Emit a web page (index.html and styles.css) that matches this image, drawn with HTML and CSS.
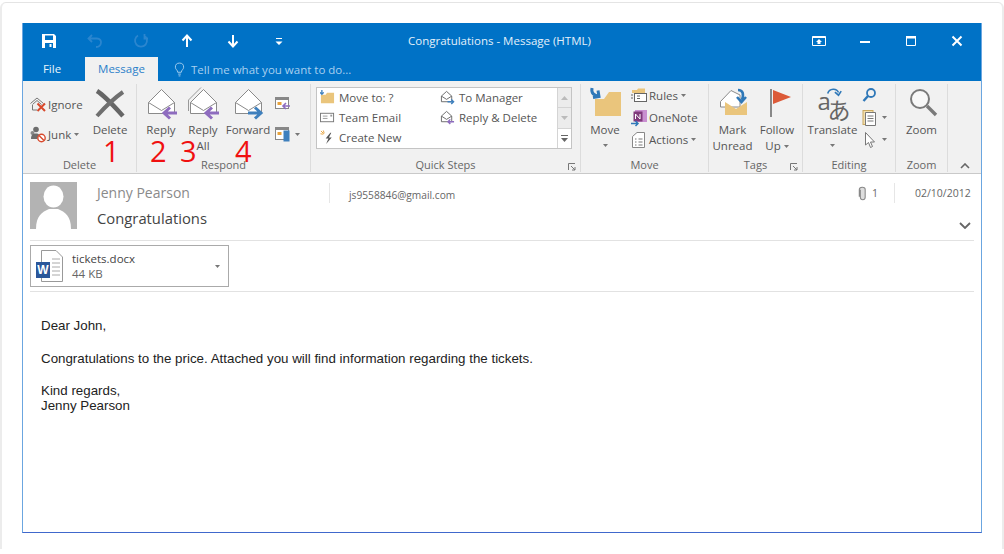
FILE: index.html
```html
<!DOCTYPE html>
<html lang="en">
<head>
  <meta charset="UTF-8">
  <meta name="viewport" content="width=device-width, initial-scale=1.0">
  <link rel="stylesheet" href="styles.css">
  <title>Congratulations - Message (HTML)</title>
</head>
<body>

  <!-- shared icons -->
  <svg class="defs" width="0" height="0">
    <symbol id="open-mail" viewBox="0 0 34 34">
      <path d="M4.500 15.500 17.500 2.500 30.500 15.500V26.500H4.500Z" fill="#fff" stroke="#8a8a8a"/>
      <path d="M4.500 15.500 17.500 23.500 30.500 15.500" fill="none" stroke="#8a8a8a"/>
    </symbol>
    <symbol id="mini-mail" viewBox="0 0 16 16">
      <path d="M1.500 6.500 7 1.500 12.500 6.500V12.500H1.500Z" fill="#fff" stroke="#666"/>
      <path d="M1.500 6.500 7 10 12.500 6.500" fill="none" stroke="#666"/>
    </symbol>
    <symbol id="caret" viewBox="0 0 7 4">
      <path d="M0 0H7L3.500 4Z" fill="#777"/>
    </symbol>
  </svg>

  <div class="page">
    <div class="window">

      <!-- title bar -->
      <header class="titlebar">
        <div class="qat">
          <svg class="qat-icon" viewBox="0 0 16 16"><path d="M1 1H13L15 3V15H1Z" fill="#fff"/><rect x="4" y="2.500" width="8" height="4.500" fill="#0072c6"/><rect x="4" y="10" width="8" height="5" fill="#0072c6"/><rect x="8.500" y="11" width="2" height="3" fill="#fff"/></svg>
          <svg class="qat-icon" viewBox="0 0 16 16"><path d="M5 2 1.500 5.500 5 9M2 5.500H10C16 5.500 15 14 9 14" fill="none" stroke="#2b86cf" stroke-width="1.800"/></svg>
          <svg class="qat-icon" viewBox="0 0 16 16"><path d="M5 2.500A6 6 0 1 0 11 2.500M11.500 1V5.500H15" fill="none" stroke="#2b86cf" stroke-width="1.800"/></svg>
          <svg class="qat-icon" viewBox="0 0 16 16"><path d="M8 14V3M3.500 7.500 8 2.500 12.500 7.500" fill="none" stroke="#fff" stroke-width="2"/></svg>
          <svg class="qat-icon" viewBox="0 0 16 16"><path d="M8 2V13M3.500 8.500 8 13.500 12.500 8.500" fill="none" stroke="#fff" stroke-width="2"/></svg>
          <svg class="qat-icon" viewBox="0 0 16 16"><path d="M5 5H11V6H5ZM4.500 8.500H11.500L8 12Z" fill="#fff"/></svg>
        </div>
        <div class="title">Congratulations - Message (HTML)</div>
        <div class="controls">
          <svg class="control" viewBox="0 0 16 16"><path d="M1.500 3.500H14.500V12.500H1.500Z" fill="none" stroke="#fff"/><path d="M1.500 3.500H14.500V5H1.500ZM8 6 11 9H9.500V11H6.500V9H5Z" fill="#fff"/></svg>
          <svg class="control" viewBox="0 0 16 16"><rect x="3" y="8" width="10" height="2" fill="#fff"/></svg>
          <svg class="control" viewBox="0 0 16 16"><path d="M3.500 3.500H12.500V12.500H3.500Z" fill="none" stroke="#fff"/><rect x="3" y="3" width="10" height="2.500" fill="#fff"/></svg>
          <svg class="control" viewBox="0 0 16 16"><path d="M3.500 3.500 12.500 12.500M12.500 3.500 3.500 12.500" stroke="#fff" stroke-width="2"/></svg>
        </div>
      </header>

      <nav class="tabs">
        <span class="tab">File</span>
        <span class="tab tab-active">Message</span>
        <span class="tell-me">
          <svg class="bulb" viewBox="0 0 12 16"><path d="M4 11C4 8.500 1.500 8 1.500 5.500A4.500 4.500 0 0 1 10.500 5.500C10.500 8 8 8.500 8 11ZM4.500 13H7.500M5 15H7" fill="none" stroke="#a9d0f0"/></svg>
          Tell me what you want to do...
        </span>
      </nav>

      <!-- ribbon -->
      <section class="ribbon">

        <div class="group group-delete">
          <div class="group-body">
            <div class="small-col small-col-two">
              <div class="small-btn">
                <svg class="small-icon" viewBox="0 0 18 18"><path d="M1.500 8.500 8 3 14.500 8.500M3.500 9.500 8 5.500 12.500 9.500M3.500 10V15H8" fill="none" stroke="#777"/><path d="M8.500 8.500 16 16M16 8.500 8.500 16" stroke="#d8492c" stroke-width="2"/></svg>
                Ignore
              </div>
              <div class="small-btn">
                <svg class="small-icon" viewBox="0 0 18 18"><circle cx="7" cy="4.500" r="2.800" fill="#6d6d6d"/><circle cx="3.500" cy="8" r="2" fill="#8a8a8a"/><path d="M2 14C2 9.500 4 8.500 7 8.500C9 8.500 10 9 10.500 10.500L8 14Z" fill="#6d6d6d"/><circle cx="12.500" cy="13" r="3.700" fill="#fff" stroke="#d8492c" stroke-width="1.400"/><path d="M10 10.500 15 15.500" stroke="#d8492c" stroke-width="1.400"/></svg>
                Junk <svg class="caret"><use href="#caret"/></svg>
              </div>
            </div>
            <div class="big-btn btn-delete">
              <svg class="big-icon" viewBox="0 0 34 35"><path d="M4 4C12 9 20 18 30 29" fill="none" stroke="#666" stroke-width="4.500"/><path d="M30 5C20 12 12 20 4 29" fill="none" stroke="#6f6f6f" stroke-width="4"/></svg>
              <span>Delete</span>
            </div>
          </div>
          <div class="group-label">Delete</div>
        </div>

        <div class="group group-respond">
          <div class="group-body">
            <div class="big-btn btn-reply">
              <svg class="big-icon" viewBox="0 0 34 35"><use href="#open-mail" width="34" height="34"/><path d="M33 26H21M26 20.500 20 26 26 31.500" fill="none" stroke="#8e6cbf" stroke-width="3"/></svg>
              <span>Reply</span>
            </div>
            <div class="big-btn btn-reply">
              <svg class="big-icon" viewBox="0 0 34 35"><path d="M2.500 24V13L15 .500" fill="none" stroke="#999"/><use href="#open-mail" width="34" height="34"/><path d="M33 26H21M26 20.500 20 26 26 31.500" fill="none" stroke="#8e6cbf" stroke-width="3"/></svg>
              <span>Reply</span>
              <span>All</span>
            </div>
            <div class="big-btn btn-forward">
              <svg class="big-icon" viewBox="0 0 34 35"><use href="#open-mail" width="34" height="34"/><path d="M17 26H29M24 20.500 30 26 24 31.500" fill="none" stroke="#3f80bd" stroke-width="3"/></svg>
              <span>Forward</span>
            </div>
            <div class="small-col small-col-two icon-col">
              <div class="small-btn">
                <svg class="small-icon" viewBox="0 0 18 18"><rect x="1.500" y="2.500" width="13" height="11" fill="#fff" stroke="#888"/><rect x="1.500" y="2.500" width="13" height="2.500" fill="#888"/><rect x="3.500" y="7" width="4" height="3" fill="#e8a33d"/><path d="M16 11H9M12 8 9 11 12 14" fill="none" stroke="#8e6cbf" stroke-width="1.600"/></svg>
              </div>
              <div class="small-btn">
                <svg class="small-icon" viewBox="0 0 18 18"><rect x="1.500" y="2.500" width="13" height="12" fill="#fff" stroke="#888"/><rect x="1.500" y="2.500" width="13" height="2.500" fill="#888"/><rect x="3.500" y="7" width="4" height="3" fill="#e8a33d"/><rect x="9.500" y="5.500" width="6" height="11" fill="#3f80bd"/></svg>
                <svg class="caret"><use href="#caret"/></svg>
              </div>
            </div>
          </div>
          <div class="group-label">Respond</div>
        </div>

        <div class="group group-quick">
          <div class="group-body">
            <div class="gallery">
              <div class="gallery-list">
                <div class="gallery-item">
                  <svg class="quick-icon" viewBox="0 0 16 16"><path d="M1 5H6L7.500 3H15V14H1Z" fill="#eac57c"/><path d="M2 0V4M0 2.500 2 4.500 4 2.500" fill="none" stroke="#3f80bd" stroke-width="1.400"/></svg>
                  Move to: ?
                </div>
                <div class="gallery-item">
                  <svg class="quick-icon" viewBox="0 0 16 16"><use href="#mini-mail" width="16" height="16"/><path d="M8 12.500H14.500M12 10 14.500 12.500 12 15" fill="none" stroke="#3f80bd" stroke-width="1.500"/></svg>
                  To Manager
                </div>
                <div class="gallery-item">
                  <svg class="quick-icon" viewBox="0 0 16 16"><rect x=".500" y="3.500" width="14" height="9" fill="#fff" stroke="#777"/><path d="M3 6.500H8M3 9H8" stroke="#999"/><rect x="11" y="5" width="2" height="2" fill="#999"/></svg>
                  Team Email
                </div>
                <div class="gallery-item">
                  <svg class="quick-icon" viewBox="0 0 16 16"><use href="#mini-mail" width="16" height="16"/><path d="M15 12.500H8.500M11 10 8.500 12.500 11 15" fill="none" stroke="#8e6cbf" stroke-width="1.500"/></svg>
                  Reply &amp; Delete
                </div>
                <div class="gallery-item">
                  <svg class="quick-icon" viewBox="0 0 16 16"><path d="M1 1 4 4M3.500 .500 4.500 3.500M.500 4 3.500 4.500" stroke="#e8a33d"/><path d="M11 3 6 9H9L6.500 15 12.500 8H9.500L12 3Z" fill="#555"/></svg>
                  Create New
                </div>
              </div>
              <div class="gallery-scroll">
                <span class="scroll-cell">
                  <svg class="scroll-mark" viewBox="0 0 7 4"><path d="M0 4 3.500 0 7 4Z" fill="#bbb"/></svg>
                </span>
                <span class="scroll-cell">
                  <svg class="scroll-mark" viewBox="0 0 7 4"><path d="M0 0H7L3.500 4Z" fill="#bbb"/></svg>
                </span>
                <span class="scroll-cell scroll-more">
                  <svg class="scroll-more-mark" viewBox="0 0 7 7"><path d="M0 0H7V1H0ZM0 3H7L3.500 7Z" fill="#666"/></svg>
                </span>
              </div>
            </div>
          </div>
          <div class="group-label">Quick Steps
            <svg class="launcher" viewBox="0 0 8 8"><path d="M.500 7V.500H7M3 3 7 7M7 4V7H4" fill="none" stroke="#777"/></svg>
          </div>
        </div>

        <div class="group group-move">
          <div class="group-body">
            <div class="big-btn btn-move">
              <svg class="big-icon" viewBox="0 0 34 35"><path d="M7 12H16L21 5H33V29H7Z" fill="#eac57c"/><path d="M4 1C3 6 6 9 11 9M5 10.500 11 9.500 10 3.500" fill="none" stroke="#2f78b8" stroke-width="3"/></svg>
              <span>Move</span>
              <svg class="caret caret-big"><use href="#caret"/></svg>
            </div>
            <div class="small-col small-col-three">
              <div class="small-btn">
                <svg class="small-icon" viewBox="0 0 18 18"><path d="M2 3H7L8 1.500H15V6H2Z" fill="#eac57c"/><rect x="4.500" y="6.500" width="12" height="8" fill="#fff" stroke="#666"/><path d="M7 9H10M7 11.500H10M1 8H3M1 11H3" stroke="#666"/></svg>
                Rules <svg class="caret"><use href="#caret"/></svg>
              </div>
              <div class="small-btn">
                <svg class="small-icon" viewBox="0 0 18 18"><rect x="5" y="1" width="12" height="12" fill="#c98fd0"/><rect x="3.500" y="2.500" width="9" height="10" fill="#80397b"/><path d="M5.500 10V5L10 10V5" fill="none" stroke="#fff"/><path d="M1 14.500H8M5.500 12 8 14.500 5.500 17" fill="none" stroke="#2f78b8" stroke-width="1.500"/></svg>
                OneNote
              </div>
              <div class="small-btn">
                <svg class="small-icon" viewBox="0 0 18 18"><path d="M2.500 5.500 7 1.500H14.500V16.500H2.500Z" fill="#fff" stroke="#888"/><path d="M5 8H6.500M5 11H6.500M5 14H6.500M8.500 8H12.500M8.500 11H12.500M8.500 14H12.500" stroke="#777"/></svg>
                Actions <svg class="caret"><use href="#caret"/></svg>
              </div>
            </div>
          </div>
          <div class="group-label">Move</div>
        </div>

        <div class="group group-tags">
          <div class="group-body">
            <div class="big-btn btn-mark">
              <svg class="big-icon" viewBox="0 0 34 35"><path d="M4.500 14.500 15 3.500 24 8V20H4.500Z" fill="#fff" stroke="#8a8a8a"/><path d="M9 15 20 22 31 15V28H9Z" fill="#eac57c"/><path d="M22 3C27 3 28 7 26 13M21 10 25.500 15 30 10" fill="none" stroke="#2f78b8" stroke-width="2.600"/></svg>
              <span>Mark<br>Unread</span>
            </div>
            <div class="big-btn btn-follow">
              <svg class="big-icon" viewBox="0 0 34 35"><rect x="10" y="2" width="2" height="28" fill="#888"/><path d="M13 3 31 10 13 17Z" fill="#dc5a38"/></svg>
              <span>Follow<br>Up <svg class="caret caret-inline"><use href="#caret"/></svg></span>
            </div>
          </div>
          <div class="group-label">Tags
            <svg class="launcher" viewBox="0 0 8 8"><path d="M.500 7V.500H7M3 3 7 7M7 4V7H4" fill="none" stroke="#777"/></svg>
          </div>
        </div>

        <div class="group group-editing">
          <div class="group-body">
            <div class="big-btn btn-translate">
              <div class="translate-icon">
                <svg class="translate-arc" viewBox="0 0 20 12"><path d="M3 7C5 1 13 1 15 6M11 5.500 15 9 18 4.500" fill="none" stroke="#2f78b8" stroke-width="1.800"/></svg>
                <span class="glyph-a">a</span><span class="glyph-kana">あ</span>
              </div>
              <span>Translate</span>
              <svg class="caret caret-big"><use href="#caret"/></svg>
            </div>
            <div class="small-col small-col-three icon-col">
              <div class="small-btn">
                <svg class="small-icon" viewBox="0 0 18 18"><circle cx="10" cy="6" r="4" fill="none" stroke="#2f78b8" stroke-width="1.800"/><path d="M7 9 2.500 14" stroke="#2f78b8" stroke-width="2.400"/></svg>
              </div>
              <div class="small-btn">
                <svg class="small-icon" viewBox="0 0 18 18"><rect x="2" y="1.500" width="10" height="14" fill="#f3dfae" stroke="#c9a860"/><path d="M4.500 3.500H14.500V16.500H4.500Z" fill="#fff" stroke="#777"/><path d="M6.500 7H12.500M6.500 9.500H12.500M6.500 12H12.500" stroke="#777"/></svg>
                <svg class="caret"><use href="#caret"/></svg>
              </div>
              <div class="small-btn">
                <svg class="small-icon" viewBox="0 0 18 18"><path d="M4.500 1.500V14L7.500 11.500 9.500 16.500 11.500 15.500 9.500 11H13.500Z" fill="#fff" stroke="#777"/></svg>
                <svg class="caret"><use href="#caret"/></svg>
              </div>
            </div>
          </div>
          <div class="group-label">Editing</div>
        </div>

        <div class="group group-zoom">
          <div class="group-body">
            <div class="big-btn btn-zoom">
              <svg class="big-icon" viewBox="0 0 34 35"><circle cx="15" cy="12" r="9" fill="#fff" fill-opacity=".5" stroke="#7a7a7a" stroke-width="2"/><path d="M22 19 31 28" stroke="#7a7a7a" stroke-width="3.400"/></svg>
              <span>Zoom</span>
            </div>
          </div>
          <div class="group-label">Zoom</div>
        </div>

        <div class="collapse">
          <svg class="collapse-icon" viewBox="0 0 10 6"><path d="M1 5 5 1 9 5" fill="none" stroke="#666" stroke-width="1.600"/></svg>
        </div>

        <span class="mark mark-1">1</span>
        <span class="mark mark-2">2</span>
        <span class="mark mark-3">3</span>
        <span class="mark mark-4">4</span>
      </section>

      <!-- message header -->
      <section class="msg-head">
        <svg class="avatar" viewBox="0 0 47 47"><rect width="47" height="47" fill="#b3b3b3"/><ellipse cx="23.500" cy="14.500" rx="10" ry="11" fill="#fff"/><path d="M6 47C6 34 12 30 19 27H28C35 30 41 34 41 47Z" fill="#fff"/></svg>
        <div class="msg-who">
          <div class="sender">Jenny Pearson</div>
          <div class="subject">Congratulations</div>
        </div>
        <div class="msg-meta">
          <div class="meta-line">
            <span class="email">js9558846@gmail.com</span>
            <span class="clip">
              <svg class="clip-icon" viewBox="0 0 8 14"><path d="M2 3.500V10.500C2 13.500 6.500 13.500 6.500 10.500V3C6.500 .500 1 .500 1 3.500V10" fill="#ddd" stroke="#888"/></svg>
              1
            </span>
            <span class="date">02/10/2012</span>
          </div>
          <svg class="expand" viewBox="0 0 12 7"><path d="M1 1 6 6 11 1" fill="none" stroke="#666" stroke-width="1.800"/></svg>
        </div>
      </section>

      <section class="attachments">
        <div class="attachment">
          <svg class="word-icon" viewBox="0 0 27 32"><path d="M5.500 .500H20L26.500 7V31.500H5.500Z" fill="#fff" stroke="#999"/><path d="M16 9H24M16 13H24M16 17H24M16 21H24M16 25H24" stroke="#aaa"/><rect y="12" width="14" height="16" fill="#2b579a"/><text class="word-letter" x="7" y="24">W</text></svg>
          <div class="file-info">
            <div class="file-name">tickets.docx</div>
            <div class="file-size">44 KB</div>
          </div>
          <svg class="caret"><use href="#caret"/></svg>
        </div>
      </section>

      <!-- message body -->
      <main class="msg-body">
        <p>Dear John,</p>
        <p>Congratulations to the price. Attached you will find information regarding the tickets.</p>
        <p>Kind regards,<br>Jenny Pearson</p>
      </main>

    </div>
  </div>

</body>
</html>
```

FILE: styles.css
```css
* {
  box-sizing: border-box;
}

html, body {
  height: 100%;
}

body {
  margin: 0;
  background-color: #fff;
  font-family: 'Open Sans', 'Noto Sans', sans-serif;
  font-size: 11.5px;
  color: #555;
  overflow: hidden;
}

.defs {
  position: absolute;
}

.page {
  height: 547px;
  margin-top: 2px;
  padding: 20px 20px 0 20px;
  background-color: #fff;
  border: 2px solid #ececec;
  border-top: 1px solid #e4e4e4;
  border-bottom: none;
  border-radius: 6px 6px 0 0;
}

.window {
  display: flex;
  flex-direction: column;
  height: 510px;
  background-color: #fff;
  border: 1px solid #6ba6e0;
  border-top: none;
  border-bottom-color: #4068cc;
}

/* title bar */
.titlebar {
  display: flex;
  align-items: center;
  height: 34px;
  padding-top: 1px;
  background-color: #0072c6;
  color: #fff;
}

.qat {
  display: flex;
  gap: 30px;
  width: 300px;
  padding-left: 18px;
}

.qat-icon {
  width: 16px;
  height: 16px;
}

.title {
  flex: 1;
  padding-left: 85px;
  color: #e3f0fa;
}

.controls {
  display: flex;
  gap: 30px;
  padding-right: 16px;
}

.control {
  width: 16px;
  height: 16px;
}

.tabs {
  position: relative;
  display: flex;
  align-items: flex-end;
  height: 24px;
  background-color: #0072c6;
}

.tab {
  width: 62px;
  height: 24px;
  padding-right: 4px;
  line-height: 23px;
  text-align: center;
  color: #eaf4fb;
}

.tab-active {
  width: 73px;
  padding-right: 0;
  background-color: #f1f1f1;
  color: #2b7fc9;
}

.tell-me {
  display: flex;
  align-items: center;
  gap: 6px;
  height: 23px;
  padding-left: 16px;
  color: #a9d0f0;
}

.bulb {
  width: 11px;
  height: 15px;
}

/* ribbon */
.ribbon {
  position: relative;
  display: flex;
  height: 93px;
  padding: 3px 0 1px;
  background-color: #f1f1f1;
  border-bottom: 1px solid #c9c9c9;
}

.group {
  display: flex;
  flex-direction: column;
  border-right: 1px solid #dcdcdc;
}

.group-delete { width: 114px; }
.group-respond { width: 174px; }
.group-quick { width: 270px; }
.group-move { width: 128px; }
.group-tags { width: 94px; }
.group-editing { width: 93px; }
.group-zoom { width: 52px; }

.group-body {
  display: flex;
  height: 73px;
  padding-top: 1px;
}

.group-delete .group-body { padding-left: 6px; }
.group-respond .group-body { padding-left: 3px; }
.group-quick .group-body { padding-left: 5px; padding-top: 3px; }
.group-move .group-body { padding-left: 2px; }

.group-label {
  position: relative;
  height: 13px;
  margin-top: 1px;
  line-height: 13px;
  text-align: center;
  font-size: 11px;
  color: #666;
}

.launcher {
  position: absolute;
  right: 4px;
  bottom: 0;
  width: 8px;
  height: 8px;
}

.big-btn {
  display: flex;
  flex-direction: column;
  align-items: center;
  padding-top: 2px;
  line-height: 16px;
  text-align: center;
}

.big-icon {
  flex: none;
  width: 34px;
  height: 35px;
}

.btn-delete { width: 42px; }
.btn-reply { width: 42px; }
.btn-forward { width: 48px; }
.btn-move { width: 44px; }
.btn-mark { width: 47px; }
.btn-follow { width: 42px; }
.btn-translate { width: 59px; }
.btn-zoom { width: 51px; }

.small-col {
  display: flex;
  flex-direction: column;
}

.small-col-two {
  width: 60px;
  padding-top: 4px;
}

.small-col-two .small-btn {
  height: 30px;
}

.small-col-three {
  margin-left: 3px;
}

.small-col-three .small-btn {
  height: 22.5px;
  margin-top: -.5px;
}

.icon-col {
  width: auto;
  margin-left: 2px;
}

.group-editing .icon-col {
  margin-left: -1px;
}

.small-btn {
  display: flex;
  align-items: center;
  gap: 1px;
  white-space: nowrap;
}

.small-icon {
  flex: none;
  width: 18px;
  height: 18px;
}

.caret {
  flex: none;
  width: 5px;
  height: 3px;
  margin-left: 2px;
}

.caret-big {
  margin: 6px 0 0;
}

.caret-inline {
  margin-left: 0;
  vertical-align: middle;
}

/* quick steps */
.gallery {
  display: flex;
  width: 256px;
  height: 62px;
  background-color: #fff;
  border: 1px solid #c4c4c4;
}

.gallery-list {
  display: grid;
  flex: 1;
  grid-template-columns: 120px 1fr;
  grid-auto-rows: 20px;
  padding: 0 0 0 3px;
}

.gallery-item {
  display: flex;
  align-items: center;
  gap: 4px;
  padding-bottom: 1px;
}

.quick-icon {
  width: 15px;
  height: 15px;
}

.gallery-scroll {
  display: flex;
  flex-direction: column;
  width: 14px;
  border-left: 1px solid #d4d4d4;
}

.scroll-cell {
  display: flex;
  flex: 1;
  align-items: center;
  justify-content: center;
  background-color: #ececec;
  border-bottom: 1px solid #d4d4d4;
}

.scroll-more {
  background-color: #fff;
  border-bottom: none;
}

.scroll-mark {
  width: 7px;
  height: 4px;
}

.scroll-more-mark {
  width: 7px;
  height: 7px;
}

/* translate */
.translate-icon {
  position: relative;
  flex: none;
  width: 34px;
  height: 35px;
}

.translate-arc {
  position: absolute;
  top: 0;
  left: 9px;
  width: 18px;
  height: 11px;
}

.glyph-a {
  position: absolute;
  top: 2px;
  left: 2px;
  font-size: 24px;
  line-height: 24px;
  color: #666;
}

.glyph-kana {
  position: absolute;
  top: 11px;
  left: 12px;
  font-family: 'Noto Sans CJK JP', sans-serif;
  font-size: 23px;
  line-height: 23px;
  color: #666;
}

.collapse {
  display: flex;
  flex: 1;
  align-items: flex-end;
  justify-content: center;
  padding-bottom: 3px;
}

.collapse-icon {
  width: 10px;
  height: 6px;
}

/* red callouts over the ribbon */
.mark {
  position: absolute;
  top: 62px;
  font-family: 'Open Sans', sans-serif;
  font-size: 29px;
  line-height: 16px;
  color: #f01010;
}

.mark-1 { left: 80px; }
.mark-2 { left: 127px; }
.mark-3 { left: 157px; }
.mark-4 { left: 212px; }

/* message header */
.msg-head {
  display: flex;
  padding: 8px 7px 10px 7px;
  height: 66px;
  border-bottom: none;
}

.avatar {
  flex: none;
  width: 47px;
  height: 47px;
}

.msg-who {
  flex: none;
  width: 252px;
  padding-left: 20px;
}

.sender {
  height: 24px;
  line-height: 22px;
  font-size: 14px;
  color: #8a8a8a;
}

.subject {
  height: 24px;
  line-height: 24px;
  font-size: 14.800px;
  color: #444;
}

.msg-meta {
  flex: 1;
  position: relative;
}

.meta-line {
  display: flex;
  align-items: center;
  height: 22px;
  font-size: 10.500px;
  color: #666;
}

.email {
  flex: 1;
  height: 20px;
  line-height: 24px;
  padding-left: 19px;
  font-size: 10.200px;
  border-left: 1px solid #e6e6e6;
}

.clip {
  display: flex;
  align-items: center;
  gap: 5px;
  width: 37px;
  height: 20px;
  border-right: 1px solid #e6e6e6;
  margin-right: 20px;
}

.clip-icon {
  width: 9px;
  height: 15px;
}

.date {
  width: 59px;
}

.expand {
  position: absolute;
  right: 3px;
  top: 40px;
  width: 12px;
  height: 7px;
}

.attachments {
  margin: 0 7px;
  padding: 4px 0;
  height: 52px;
  border-top: 1px solid #e2e2e2;
  border-bottom: 1px solid #e2e2e2;
}

.attachment {
  display: flex;
  align-items: center;
  width: 199px;
  height: 42px;
  padding: 0 8px 0 5px;
  border: 1px solid #aaa;
}

.word-icon {
  flex: none;
  width: 27px;
  height: 32px;
}

.word-letter {
  font-family: 'Liberation Sans', sans-serif;
  font-size: 12px;
  font-weight: bold;
  text-anchor: middle;
  fill: #fff;
}

.file-info {
  flex: 1;
  padding-left: 9px;
  line-height: 15px;
}

.file-name {
  color: #444;
}

.file-size {
  color: #666;
}

/* message body */
.msg-body {
  flex: 1;
  padding: 26px 18px;
  font-family: 'Liberation Sans', Arial, sans-serif;
  font-size: 13.330px;
  line-height: 15px;
  color: #222;
}

.msg-body p {
  margin: 0 0 17.500px;
}
```
